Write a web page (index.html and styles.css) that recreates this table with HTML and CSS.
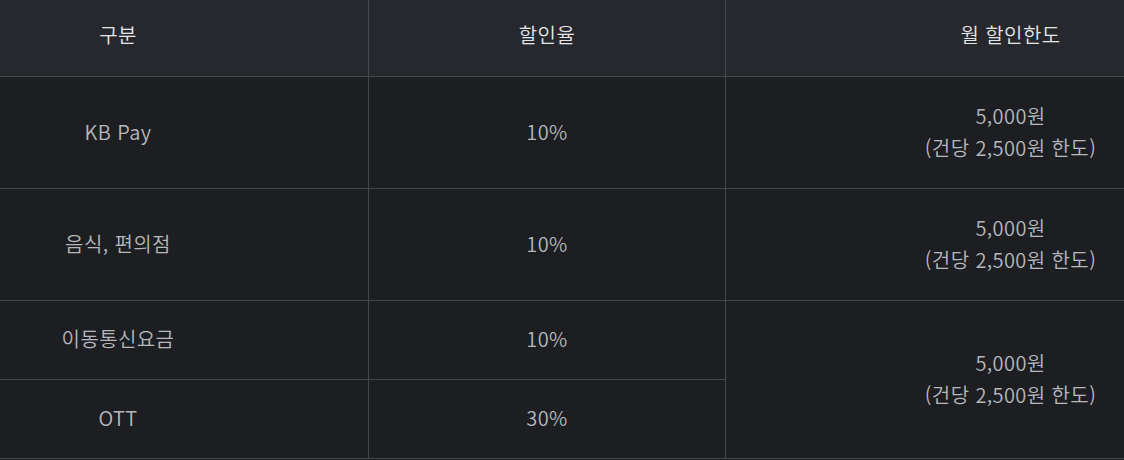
FILE: index.html
```html
<!DOCTYPE html>
<html lang="ko">
<head>
<meta charset="utf-8">
<link rel="stylesheet" href="styles.css">
</head>
<body>
<div class="table">
  <div class="cell head c1">구분</div>
  <div class="cell head c2">할인율</div>
  <div class="cell head c3">월 할인한도</div>

  <div class="cell c1 r-tall">KB Pay</div>
  <div class="cell c2 r-tall">10%</div>
  <div class="cell c3 r-tall">5,000원<br>(건당 2,500원 한도)</div>

  <div class="cell c1 r-tall">음식, 편의점</div>
  <div class="cell c2 r-tall">10%</div>
  <div class="cell c3 r-tall">5,000원<br>(건당 2,500원 한도)</div>

  <div class="cell c1">이동통신요금</div>
  <div class="cell c2">10%</div>
  <div class="cell c3 span2">5,000원<br>(건당 2,500원 한도)</div>

  <div class="cell c1">OTT</div>
  <div class="cell c2">30%</div>
</div>
</body>
</html>
```
FILE: styles.css
```css
html, body {
  margin: 0;
  padding: 0;
  background: #1b1c1f;
}
body {
  font-family: "Noto Sans CJK KR", "Noto Sans", sans-serif;
  font-size: 20px;
  font-weight: 350;
  overflow: hidden;
}
.table {
  display: grid;
  grid-template-columns: 369px 357px 398px;
  grid-template-rows: 77px 112px 112px 79px 79px;
  width: 1124px;
  background: #1d1e22;
}
.cell {
  display: flex;
  align-items: center;
  justify-content: center;
  text-align: center;
  line-height: 32px;
  color: #b6b8bc;
  border-bottom: 1px solid #46474b;
  box-sizing: border-box;
  letter-spacing: 0.4px;
}
.head {
  background: #27282d;
  color: #e4e5e7;
}
.c1 {
  border-right: 1px solid #46474b;
  padding-right: 132px;
  padding-bottom: 2px;
}
.c2 {
  border-right: 1px solid #46474b;
  padding-bottom: 2px;
}
.c3 {
  padding-left: 171px;
  padding-bottom: 2px;
}
.head.c1, .head.c2, .head.c3 {
  padding-bottom: 6px;
}
.span2 {
  grid-row: span 2;
}
```
